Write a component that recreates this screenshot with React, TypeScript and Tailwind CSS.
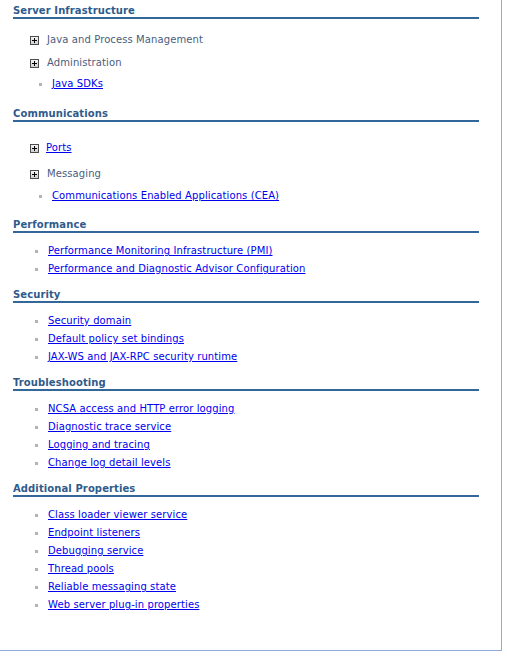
import { ReactNode } from 'react';

interface Section {
  title: string;
  links: string[];
}

const simpleSections: Section[] = [
  {
    title: 'Performance',
    links: ['Performance Monitoring Infrastructure (PMI)', 'Performance and Diagnostic Advisor Configuration'],
  },
  {
    title: 'Security',
    links: ['Security domain', 'Default policy set bindings', 'JAX-WS and JAX-RPC security runtime'],
  },
  {
    title: 'Troubleshooting',
    links: [
      'NCSA access and HTTP error logging',
      'Diagnostic trace service',
      'Logging and tracing',
      'Change log detail levels',
    ],
  },
  {
    title: 'Additional Properties',
    links: [
      'Class loader viewer service',
      'Endpoint listeners',
      'Debugging service',
      'Thread pools',
      'Reliable messaging state',
      'Web server plug-in properties',
    ],
  },
];

function Heading({ children, className = '' }: { children: ReactNode; className?: string }) {
  return (
    <h3 className={`text-[10px] font-bold leading-[13px] tracking-[0.1px] text-[#2f5b8c] border-b-2 border-[#336699] ${className}`}>
      {children}
    </h3>
  );
}

function PlusBox() {
  return (
    <span className="w-[9px] h-[9px] border border-[#4d4d4d] bg-gradient-to-b from-[#f4f4f4] to-[#cfcfcf] relative shrink-0">
      <span className="absolute left-[1px] top-[3px] w-[5px] h-[1px] bg-black" />
      <span className="absolute left-[3px] top-[1px] w-[1px] h-[5px] bg-black" />
    </span>
  );
}

function Expand({ label, link, className = '' }: { label: string; link?: boolean; className?: string }) {
  return (
    <div className={`flex items-center h-[18px] pl-[17px] ${className}`}>
      <PlusBox />
      {link ? (
        <a href="#" className="ml-[7px] text-[#0000ee] underline">
          {label}
        </a>
      ) : (
        <span className="ml-[8px] text-[#4a5d7e]">{label}</span>
      )}
    </div>
  );
}

function LinkItem({ label, deep }: { label: string; deep?: boolean }) {
  return (
    <li className={`flex items-center h-[18px] ${deep ? 'pl-[26px]' : 'pl-[22px]'}`}>
      <span className="w-[3px] h-[3px] bg-[#b3b3b3] mt-[1px]" />
      <a href="#" className="ml-[10px] text-[#0000ee] underline">
        {label}
      </a>
    </li>
  );
}

export default function App() {
  return (
    <div className="w-[502px] h-[651px] bg-white border-r border-b border-[#8fa9d9] pl-[13px] pr-[22px] pt-[4px] text-[10px] leading-[18px] tracking-[0.1px] font-['DejaVu_Sans',Verdana,sans-serif]">
      <Heading>Server Infrastructure</Heading>
      <Expand label="Java and Process Management" className="mt-[12px]" />
      <Expand label="Administration" className="mt-[5px]" />
      <ul className="mt-[3px]">
        <LinkItem label="Java SDKs" deep />
      </ul>

      <Heading className="mt-[14px]">Communications</Heading>
      <Expand label="Ports" link className="mt-[17px]" />
      <Expand label="Messaging" className="mt-[8px]" />
      <ul className="mt-[4px]">
        <LinkItem label="Communications Enabled Applications (CEA)" deep />
      </ul>

      {simpleSections.map((s, i) => (
        <div key={s.title} className={i === 0 ? 'mt-[13px]' : 'mt-[10px]'}>
          <Heading>{s.title}</Heading>
          <ul className="mt-[9px]">
            {s.links.map((l) => (
              <LinkItem key={l} label={l} />
            ))}
          </ul>
        </div>
      ))}
    </div>
  );
}
